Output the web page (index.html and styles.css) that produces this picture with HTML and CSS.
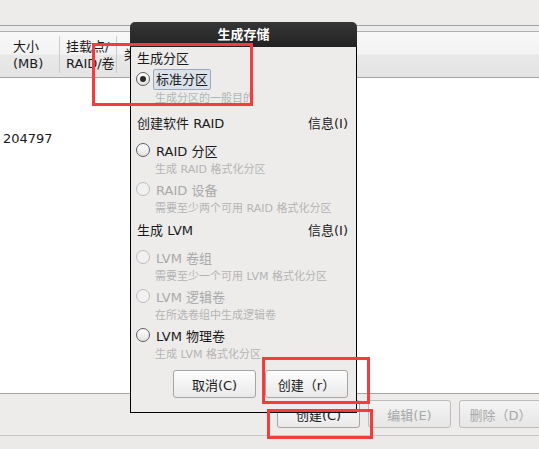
FILE: index.html
```html
<!DOCTYPE html>
<html lang="zh-CN">
<head>
    <meta charset="UTF-8">
    <meta name="viewport" content="width=device-width, initial-scale=1.0">
    <title>生成存储</title>
    <link rel="stylesheet" href="styles.css">
</head>
<body>
    <div class="window">
        <div class="topbar"></div>
        <div class="tree-gap"></div>
        <div class="table">
            <div class="thead">
                <div class="th th-size">大小<br>(MB)</div>
                <span class="sep"></span>
                <div class="th th-mount">挂载点/<br>RAID/卷</div>
                <span class="sep"></span>
                <div class="th th-type">类型</div>
            </div>
            <div class="tbody">
                <div class="row">204797</div>
            </div>
        </div>
        <div class="buttonbar">
            <button class="btn">创建(C)</button>
            <button class="btn" disabled>编辑(E)</button>
            <button class="btn" disabled>删除（D）</button>
        </div>
        <div class="footer"></div>
    </div>

    <div class="dialog">
        <div class="dialog-title">生成存储</div>
        <div class="dialog-body">
            <div class="section-title">生成分区</div>
            <div class="option">
                <span class="radio checked"></span>
                <span class="focus">标准分区</span>
            </div>
            <div class="hint">生成分区的一般目的</div>

            <div class="section-title sec-raid">
                <span>创建软件 RAID</span>
                <span>信息(I)</span>
            </div>
            <div class="option first">
                <span class="radio"></span>
                <span>RAID 分区</span>
            </div>
            <div class="hint">生成 RAID 格式化分区</div>
            <div class="option disabled">
                <span class="radio"></span>
                <span>RAID 设备</span>
            </div>
            <div class="hint">需要至少两个可用 RAID 格式化分区</div>

            <div class="section-title sec-lvm">
                <span>生成 LVM</span>
                <span>信息(I)</span>
            </div>
            <div class="option first disabled">
                <span class="radio"></span>
                <span>LVM 卷组</span>
            </div>
            <div class="hint">需要至少一个可用 LVM 格式化分区</div>
            <div class="option disabled">
                <span class="radio"></span>
                <span>LVM 逻辑卷</span>
            </div>
            <div class="hint">在所选卷组中生成逻辑卷</div>
            <div class="option">
                <span class="radio"></span>
                <span>LVM 物理卷</span>
            </div>
            <div class="hint">生成 LVM 格式化分区</div>

            <div class="dialog-buttons">
                <button class="btn">取消(C)</button>
                <button class="btn">创建（r）</button>
            </div>
        </div>
    </div>

    <!-- пометки поверх скриншота -->
    <div class="mark mark-type"></div>
    <div class="mark mark-create"></div>
    <div class="mark mark-main"></div>
</body>
</html>
```

FILE: styles.css
```css
body {
    margin: 0;
    padding: 0;
    width: 539px;
    height: 449px;
    overflow: hidden;
    position: relative;
    background-color: #edeceb;
    font-family: "DejaVu Sans", "Noto Sans CJK SC", sans-serif;
    font-size: 13px;
    color: #1a1a1a;
}
.window {
    display: flex;
    flex-direction: column;
    height: 449px;
}
.topbar {
    height: 25px;
    background-color: #edeceb;
}
.tree-gap {
    height: 5px;
    border-top: 1px solid #a2a2a2;
    border-bottom: 1px solid #b2b2b2;
    background-color: #ededed;
}
.table {
    flex: 0 0 auto;
    display: flex;
    flex-direction: column;
}
.thead {
    height: 45px;
    display: flex;
    align-items: center;
    border-bottom: 1px solid #a4a4a4;
    background: linear-gradient(#f8f8f8 0%, #f3f3f3 48%, #e8e8e8 52%, #e4e4e4 100%);
}
.th {
    line-height: 17px;
    white-space: nowrap;
}
.th-size {
    width: 46px;
    padding-left: 13px;
}
.th-mount {
    width: 50px;
    padding-left: 6px;
}
.th-type {
    padding-left: 7px;
}
.sep {
    width: 1px;
    height: 37px;
    background-color: #cacaca;
}
.tbody {
    height: 315px;
    background-color: #ffffff;
}
.row {
    padding: 52px 0 0 3px;
    line-height: 18px;
}
.buttonbar {
    height: 43px;
    box-sizing: border-box;
    border-top: 1px solid #a4a4a4;
    border-bottom: 1px solid #c8c8c8;
    display: flex;
    gap: 8px;
    padding-left: 277px;
    padding-top: 6px;
    overflow: hidden;
}
.footer {
    flex: 1;
    background-color: #ebeae9;
}
.btn {
    width: 83px;
    height: 28px;
    flex: 0 0 auto;
    padding: 0;
    font-family: inherit;
    font-size: 13px;
    color: #1a1a1a;
    border: 1px solid #a5a5a5;
    border-radius: 3px;
    background: linear-gradient(#fdfdfd, #e9e9e9);
}
.btn:disabled {
    color: #a8a8a8;
    border-color: #bcbcbc;
    background: linear-gradient(#f4f4f4, #e6e6e6);
}

/* диалог */
.dialog {
    position: absolute;
    left: 130px;
    top: 22px;
    width: 227px;
    height: 391px;
    display: flex;
    flex-direction: column;
}
.dialog-title {
    height: 25px;
    line-height: 25px;
    text-align: center;
    font-weight: bold;
    color: #ffffff;
    background: linear-gradient(#363636, #222222);
    border-radius: 5px 5px 0 0;
}
.dialog-body {
    flex: 1;
    border: 1px solid #000000;
    border-top: none;
    background-color: #edeceb;
    padding: 2px 8px 0 6px;
    display: flex;
    flex-direction: column;
}
.section-title {
    height: 20px;
    line-height: 20px;
    display: flex;
    justify-content: space-between;
}
.sec-raid {
    margin-top: 6px;
}
.sec-lvm {
    margin-top: 3px;
}
.option {
    height: 20px;
    display: flex;
    align-items: center;
    gap: 6px;
}
.option.first {
    margin-top: 6px;
}
.option.disabled {
    color: #a9a9a9;
}
.radio {
    width: 12px;
    height: 12px;
    margin-left: -1px;
    border: 1px solid #5e5e5e;
    border-radius: 50%;
    background: linear-gradient(#ffffff, #e2e2e2);
    display: flex;
    align-items: center;
    justify-content: center;
}
.radio.checked::after {
    content: "";
    width: 6px;
    height: 6px;
    border-radius: 50%;
    background-color: #2a2a2a;
}
.option.disabled .radio {
    border-color: #bdbdbd;
    background: #f1f1f1;
}
.focus {
    margin-left: -3px;
    padding: 0 2px;
    line-height: 19px;
    border: 1px solid #9aa8bc;
    border-radius: 2px;
    background-color: #dce2ea;
}
.hint {
    height: 19px;
    line-height: 19px;
    padding-left: 18px;
    font-size: 11px;
    color: #b4b4b4;
    white-space: nowrap;
}
.dialog-buttons {
    margin-top: 6px;
    display: flex;
    justify-content: flex-end;
    gap: 9px;
}

/* красные рамки */
.mark {
    position: absolute;
    border: 3px solid #f33c3c;
    box-sizing: border-box;
}
.mark-type {
    left: 92px;
    top: 43px;
    width: 161px;
    height: 63px;
}
.mark-create {
    left: 262px;
    top: 357px;
    width: 108px;
    height: 47px;
}
.mark-main {
    left: 267px;
    top: 409px;
    width: 106px;
    height: 30px;
}
```
